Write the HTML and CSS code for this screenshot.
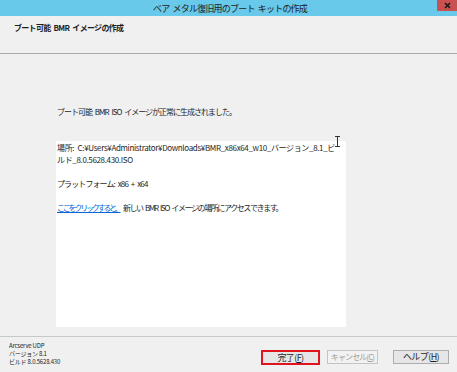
FILE: index.html
```html
<!DOCTYPE html>
<html lang="ja">
<head>
  <meta charset="UTF-8" />
  <meta name="viewport" content="width=device-width, initial-scale=1.0"/>
  <title>ベア メタル復旧用のブート キットの作成</title>
  <link rel="stylesheet" href="styles.css">
</head>
<body>

  <div class="window">
    <!-- title bar -->
    <div class="titlebar">
      <span class="title">ベア メタル復旧用のブート キットの作成</span>
      <div class="close-btn">
        <svg width="7" height="7" viewBox="0 0 7 7">
          <path d="M1 1 L6 6 M6 1 L1 6" stroke="#1a1a1a" stroke-width="1.6"/>
        </svg>
      </div>
    </div>

    <!-- wizard header -->
    <div class="wizard-header">
      <h2>ブート可能 BMR イメージの作成</h2>
    </div>

    <!-- main content -->
    <div class="content">
      <p class="message">ブート可能 BMR ISO イメージが正常に生成されました。</p>
      <div class="result-box">
        <p class="path">場所: C:¥Users¥Administrator¥Downloads¥BMR_x86x64_w10_バージョン_8.1_ビ<br>ルド_8.0.5628.430.ISO</p>
        <p class="platform">プラットフォーム: x86 + x64</p>
        <p class="access"><a href="#" class="link">ここをクリックすると、</a> 新しい BMR ISO イメージの場所にアクセスできます。</p>
        <svg class="ibeam" width="7" height="11" viewBox="0 0 7 11">
          <path d="M1 0.5 H6 M1 10.5 H6 M3.5 0.5 V10.5" stroke="#333" stroke-width="1"/>
        </svg>
      </div>
    </div>

    <!-- footer -->
    <div class="footer">
      <div class="product-info">
        <div>Arcserve UDP</div>
        <div>バージョン 8.1</div>
        <div>ビルド 8.0.5628.430</div>
      </div>
      <div class="buttons">
        <button class="btn btn-finish">完了(<u>F</u>)</button>
        <button class="btn btn-disabled">キャンセル(<u>C</u>)</button>
        <button class="btn">ヘルプ(<u>H</u>)</button>
      </div>
    </div>
  </div>

</body>
</html>
```

FILE: styles.css
```css
body {
  margin: 0;
  font-family: "Noto Sans CJK JP", "DejaVu Sans", sans-serif;
  font-size: 8px;
  color: #1e1e1e;
  background: #f0f0f0;
}

.window {
  width: 457px;
  height: 372px;
  display: flex;
  flex-direction: column;
  background: #f0f0f0;
  overflow: hidden;
}

.titlebar {
  position: relative;
  height: 16px;
  background: #68c9ea;
  display: flex;
  align-items: center;
  justify-content: center;
}

.title {
  font-size: 9px;
  letter-spacing: -0.8px;
  word-spacing: 2px;
  color: #222;
  margin-left: 3px;
}

.close-btn {
  position: absolute;
  right: 0;
  top: 0;
  width: 20px;
  height: 11px;
  background: #c9514f;
  display: flex;
  align-items: center;
  justify-content: center;
}

.wizard-header {
  height: 37px;
  border-bottom: 1px solid #a9a9a9;
  padding-left: 14px;
}

.wizard-header h2 {
  margin: 0;
  padding-top: 6px;
  font-size: 8px;
  font-weight: bold;
  letter-spacing: -0.7px;
  word-spacing: 2px;
  line-height: 12px;
}

.content {
  flex: 1;
  padding: 52px 0 0 56px;
  border-bottom: 1px solid #c8c8c8;
}

.message {
  margin: 0 0 23px 1px;
  line-height: 12px;
  letter-spacing: -1px;
  word-spacing: 2px;
}

.result-box {
  position: relative;
  width: 290px;
  height: 186px;
  background: #fff;
  box-sizing: border-box;
  padding: 1px 0 0 1px;
}

.result-box p {
  margin: 0 0 12px;
  line-height: 12px;
  white-space: nowrap;
  word-spacing: 2px;
}

.result-box .path {
  letter-spacing: -0.35px;
}

.result-box .platform {
  letter-spacing: -0.9px;
}

.result-box .access {
  letter-spacing: -1.4px;
}

.link {
  color: #0b66d6;
  text-decoration: underline;
  letter-spacing: -2.2px;
}

.ibeam {
  position: absolute;
  left: 278px;
  top: -5px;
}

.footer {
  height: 35px;
  display: flex;
  align-items: center;
  justify-content: space-between;
  padding: 0 8px 0 9px;
}

.product-info {
  font-size: 6px;
  line-height: 8px;
  letter-spacing: -0.2px;
  color: #222;
  margin-top: -1px;
}

.buttons {
  display: flex;
  gap: 7px;
  margin-top: 5px;
}

.btn {
  font-family: inherit;
  font-size: 9px;
  letter-spacing: -0.6px;
  white-space: nowrap;
  height: 14px;
  padding: 0;
  background: #e6e6e6;
  border: 1px solid #adadad;
  color: #1e1e1e;
  line-height: 12px;
  overflow: hidden;
}

.btn-finish {
  width: 59px;
  height: 15px;
  border: 2px solid #e0141c;
}

.btn-disabled {
  width: 51px;
  color: #a0a0a0;
  border-color: #c4c4c4;
  background: #f2f2f2;
  margin-right: 8px;
  font-size: 8px;
  letter-spacing: -0.9px;
}

.btn:last-child {
  width: 56px;
}
```
